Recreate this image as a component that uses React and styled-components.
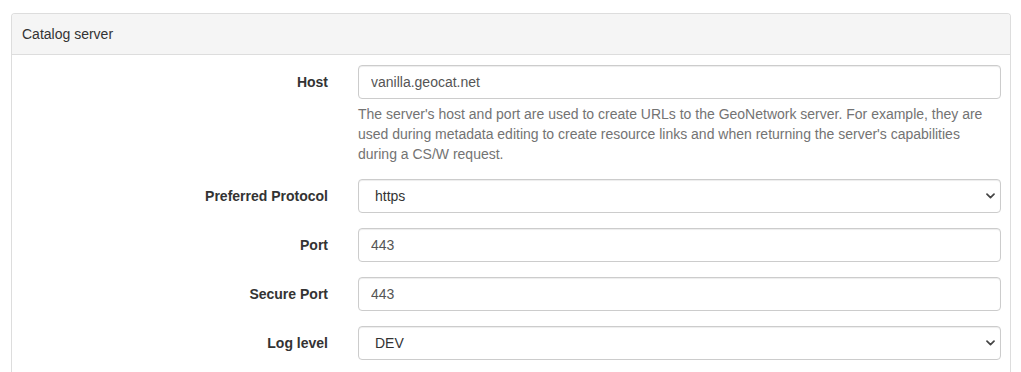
import React from "react";
import styled, { createGlobalStyle } from "styled-components";

const fields = [
  { label: "Host", value: "vanilla.geocat.net", help: true },
  { label: "Preferred Protocol", value: "https", select: true },
  { label: "Port", value: "443" },
  { label: "Secure Port", value: "443" },
  { label: "Log level", value: "DEV", select: true },
];

export default function App() {
  return (
    <Page>
      <GlobalStyle />
      <Panel>
        <PanelHeading>Catalog server</PanelHeading>
        <PanelBody>
          {fields.map((f) => (
            <FormGroup key={f.label}>
              <Label>{f.label}</Label>
              <Control>
                {f.select ? (
                  <SelectBox>
                    <SelectText>{f.value}</SelectText>
                    <Chevron viewBox="0 0 9 6" aria-hidden="true">
                      <path d="M1 1.2 L4.5 4.6 L8 1.2" />
                    </Chevron>
                  </SelectBox>
                ) : (
                  <Input defaultValue={f.value} />
                )}
                {f.help && (
                  <HelpBlock>
                    The server's host and port are used to create URLs to the
                    GeoNetwork server. For example, they are used during
                    metadata editing to create resource links and when returning
                    the server's capabilities during a CS/W request.
                  </HelpBlock>
                )}
              </Control>
            </FormGroup>
          ))}
        </PanelBody>
      </Panel>
    </Page>
  );
}

const GlobalStyle = createGlobalStyle`
  body {
    margin: 0;
    background: #fff;
    font-family: "Liberation Sans", Arial, sans-serif;
    font-size: 14px;
    line-height: 20px;
    color: #333;
  }
`;

const Page = styled.div`
  padding: 13px 10px 0 11px;
  height: 372px;
  box-sizing: border-box;
  overflow: hidden;
`;

const Panel = styled.div`
  border: 1px solid #ddd;
  border-bottom: none;
  border-radius: 4px 4px 0 0;
  background: #fff;
  min-height: 400px;
`;

const PanelHeading = styled.div`
  padding: 10px 10px;
  background: #f5f5f5;
  border-bottom: 1px solid #ddd;
  border-radius: 3px 3px 0 0;
  color: #333;
`;

const PanelBody = styled.div`
  padding: 10px 9px 0 0;
  display: flex;
  flex-direction: column;
  gap: 15px;
`;

const FormGroup = styled.div`
  display: grid;
  grid-template-columns: 316px 1fr;
  column-gap: 30px;
`;

const Label = styled.label`
  text-align: right;
  font-weight: 700;
  padding-top: 7px;
  line-height: 20px;
`;

const Control = styled.div`
  display: flex;
  flex-direction: column;
`;

const Input = styled.input`
  box-sizing: border-box;
  height: 34px;
  width: 100%;
  padding: 6px 12px;
  border: 1px solid #ccc;
  border-radius: 4px;
  font: inherit;
  color: #555;
  background: #fff;
  box-shadow: inset 0 1px 1px rgba(0, 0, 0, 0.075);
  outline: none;
`;

const SelectBox = styled.div`
  box-sizing: border-box;
  height: 34px;
  display: flex;
  align-items: center;
  justify-content: space-between;
  padding: 0 5px 0 16px;
  border: 1px solid #ccc;
  border-radius: 4px;
  background: #fff;
  color: #555;
  box-shadow: inset 0 1px 1px rgba(0, 0, 0, 0.075);
`;

const SelectText = styled.span`
  color: #333;
`;

const Chevron = styled.svg`
  width: 9px;
  height: 6px;
  fill: none;
  stroke: #444;
  stroke-width: 1.7;
  stroke-linecap: round;
  stroke-linejoin: round;
`;

const HelpBlock = styled.p`
  margin: 5px 0 0;
  color: #737373;
  line-height: 20px;
`;
